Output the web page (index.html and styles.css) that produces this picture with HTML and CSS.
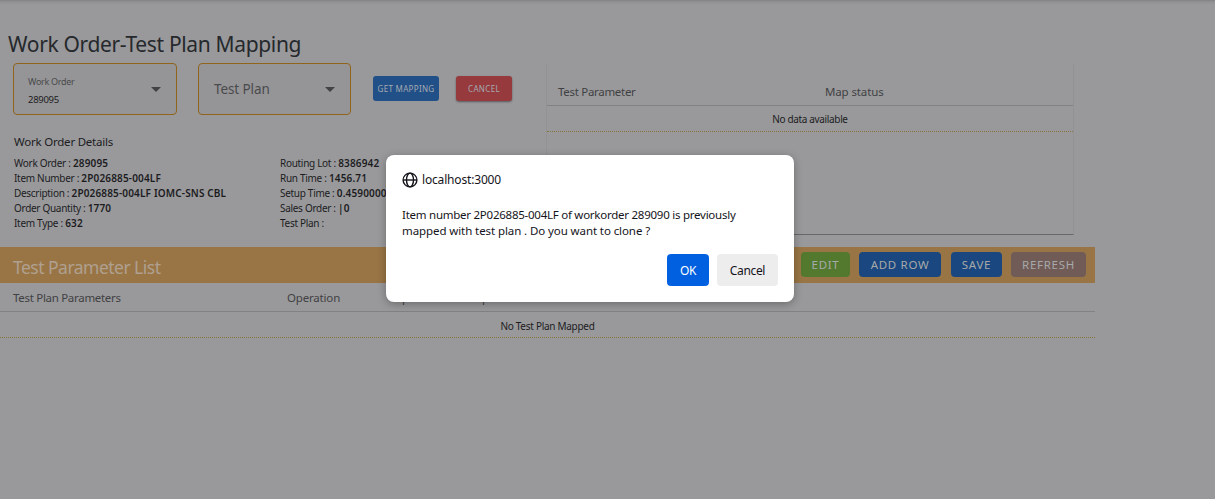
FILE: index.html
```html
<!DOCTYPE html>
<html lang="en">
<head>
<meta charset="utf-8">
<title>Work Order-Test Plan Mapping</title>
<link rel="stylesheet" href="styles.css">
</head>
<body>
<main class="page">
  <h1 class="title">Work Order-Test Plan Mapping</h1>
  <div class="top">
    <section class="left">
      <div class="controls">
        <div class="select select-order">
          <div class="select-text"><span class="select-label">Work Order</span><span class="select-value">289095</span></div>
          <svg class="arrow" viewBox="0 0 10 5"><path d="M0 0h10L5 5z"/></svg>
        </div>
        <div class="select select-plan">
          <span class="select-empty">Test Plan</span>
          <svg class="arrow" viewBox="0 0 10 5"><path d="M0 0h10L5 5z"/></svg>
        </div>
        <button class="small-btn get">GET MAPPING</button>
        <button class="small-btn cancel">CANCEL</button>
      </div>
      <h2 class="details-title">Work Order Details</h2>
      <div class="details">
        <div class="col">
          <p>Work Order : <b>289095</b></p>
          <p>Item Number : <b>2P026885-004LF</b></p>
          <p>Description : <b>2P026885-004LF IOMC-SNS CBL</b></p>
          <p>Order Quantity : <b>1770</b></p>
          <p>Item Type : <b>632</b></p>
        </div>
        <div class="col">
          <p>Routing Lot : <b>8386942</b></p>
          <p>Run Time : <b>1456.71</b></p>
          <p>Setup Time : <b>0.4590000</b></p>
          <p>Sales Order : <b>|0</b></p>
          <p>Test Plan :</p>
        </div>
      </div>
    </section>
    <section class="status">
      <div class="status-head"><span class="th-param">Test Parameter</span><span class="th-status">Map status</span></div>
      <div class="status-empty">No data available</div>
    </section>
  </div>
  <section class="list">
    <div class="band">
      <h2 class="band-title">Test Parameter List</h2>
      <div class="actions">
        <button class="btn edit">EDIT</button>
        <button class="btn add">ADD ROW</button>
        <button class="btn save">SAVE</button>
        <button class="btn refresh">REFRESH</button>
      </div>
    </div>
    <div class="list-head"><span class="th-plan">Test Plan Parameters</span><span class="th-op">Operation</span><span class="th-narrow">p</span><span>p</span></div>
    <div class="list-empty">No Test Plan Mapped</div>
  </section>
</main>
<div class="dialog" role="dialog">
  <div class="origin">
    <svg class="globe" viewBox="0 0 16 16"><circle cx="8" cy="8" r="6.9"/><ellipse cx="8" cy="8" rx="3.5" ry="6.9"/><path d="M1.1 8h13.8"/></svg>
    <span class="host">localhost:3000</span>
  </div>
  <p class="message"><span class="line1">Item number 2P026885-004LF of workorder 289090 is previously</span><br><span class="line2">mapped with test plan . Do you want to clone ?</span></p>
  <div class="dialog-actions"><button class="dlg ok">OK</button><button class="dlg dismiss">Cancel</button></div>
</div>
</body>
</html>
```
FILE: styles.css
```css
* { box-sizing: border-box; }
body {
  margin: 0;
  height: 499px;
  overflow: hidden;
  background: #99999b;
  color: #1c1c1f;
  font-family: "Noto Sans", "Open Sans", sans-serif;
}
h1, h2, p { margin: 0; font-weight: 400; }
button { border: 0; padding: 0; font-family: inherit; white-space: nowrap; }
.page {
  height: 499px;
  padding-top: 29px;
  background: linear-gradient(#818183, #929294 2px, #99999b 5px);
}
.title { height: 34px; padding-left: 8px; font-size: 21px; line-height: 30px; letter-spacing: -.34px; color: #25282c; white-space: nowrap; }
.top { display: flex; height: 184px; }
.left { width: 546px; }
.controls { display: flex; height: 52px; padding-left: 13px; }
.select { display: flex; align-items: center; justify-content: space-between; height: 52px; border: 1px solid #91641b; border-radius: 4px; background: #959597; }
.select-order { width: 164px; margin-right: 21px; padding: 0 15px 0 14px; }
.select-plan { width: 153px; margin-right: 22px; padding: 0 15px; }
.select-text { display: flex; flex-direction: column; gap: 4px; padding-top: 4px; }
.select-label { font-size: 9px; line-height: 14px; color: #4a4a4c; letter-spacing: -.3px; }
.select-value { font-size: 9.5px; line-height: 14px; letter-spacing: -.3px; }
.select-empty { font-size: 13.5px; color: #4a4a4c; letter-spacing: -.1px; }
.arrow { width: 10px; height: 5px; fill: #424244; }
.small-btn { height: 25px; margin-top: 13px; border-radius: 3px; font-size: 8px; letter-spacing: .32px; color: #a5a9b0; }
.get { width: 66px; margin-right: 17px; background: #215088; }
.cancel { width: 56px; background: #963a3d; box-shadow: 0 1px 2px #59595b; }
.details-title { margin-top: 17px; padding-left: 14px; font-size: 11.5px; line-height: 20px; letter-spacing: -.22px; }
.details { display: flex; padding: 4px 0 0 14px; font-size: 10px; line-height: 15px; letter-spacing: -.3px; white-space: nowrap; }
.col { width: 266px; }
.details b { font-weight: 600; letter-spacing: .16px; }
.status { width: 528px; height: 172px; border-left: 1px solid #929294; border-right: 1px solid #929294; border-bottom: 1px solid #686869; }
.status-head { display: flex; align-items: center; height: 43px; padding: 14px 0 0 11px; border-bottom: 1px solid #828284; font-size: 11.5px; color: #414143; }
.th-param { width: 267px; letter-spacing: -.3px; }
.th-status { letter-spacing: -.13px; }
.status-empty { height: 26px; border-bottom: 1px dotted #85743c; text-align: center; font-size: 10px; line-height: 27px; letter-spacing: -.35px; }
.list { width: 1095px; }
.band { display: flex; justify-content: space-between; height: 36px; padding: 0 9px 0 13px; background: #997545; }
.band-title { font-size: 17.5px; line-height: 41px; letter-spacing: -.52px; color: #afa090; }
.actions { display: flex; padding-top: 5px; }
.btn { height: 25px; border-radius: 4px; font-size: 11.5px; letter-spacing: .7px; color: #a6a9aa; }
.edit { width: 49px; margin-right: 9px; background: #53792f; }
.add { width: 82px; margin-right: 10px; background: #1a477f; }
.save { width: 51px; margin-right: 9px; background: #1a477f; }
.refresh { width: 75px; background: #705b57; }
.list-head { display: flex; height: 29px; padding-left: 13px; border-bottom: 1px solid #828284; font-size: 11.5px; line-height: 30px; color: #414143; }
.th-plan { width: 274px; letter-spacing: -.3px; }
.th-op { width: 115px; letter-spacing: -.18px; }
.th-narrow { width: 80px; }
.list-empty { height: 26px; border-bottom: 1px dotted #85743c; text-align: center; font-size: 10px; line-height: 28px; letter-spacing: -.28px; }
.dialog {
  position: absolute;
  left: 386px;
  top: 155px;
  width: 408px;
  height: 147px;
  padding: 16px;
  border-radius: 8px;
  background: #fff;
  color: #15141a;
  box-shadow: 0 2px 8px rgba(0, 0, 0, .3);
  font-size: 12px;
  white-space: nowrap;
}
.origin { display: flex; align-items: center; gap: 4px; height: 17px; }
.globe { width: 16px; height: 16px; fill: none; stroke: #15141a; stroke-width: 1.4; }
.host { letter-spacing: -.17px; }
.message { margin-top: 19px; font-size: 11.5px; line-height: 16px; }
.line1 { letter-spacing: -.25px; }
.line2 { letter-spacing: -.09px; }
.dialog-actions { display: flex; justify-content: flex-end; gap: 8px; margin-top: 15px; }
.dlg { height: 32px; border-radius: 4px; font-size: 12px; letter-spacing: -.35px; }
.ok { width: 42px; background: #0060df; color: #fff; }
.dismiss { width: 61px; background: #ededee; color: #15141a; }
```
